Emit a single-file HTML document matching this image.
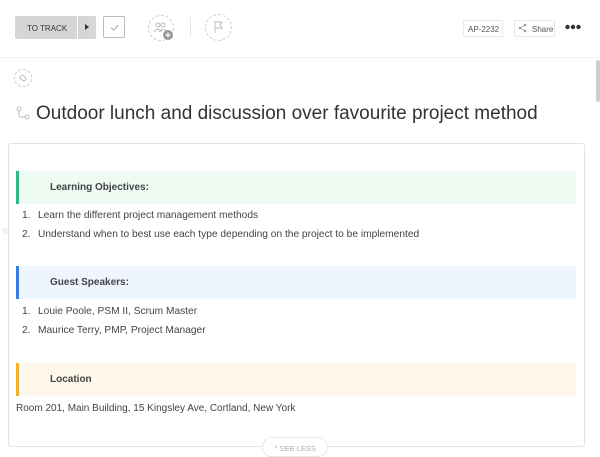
<!DOCTYPE html>
<html><head><meta charset="utf-8"><style>
*{margin:0;padding:0;box-sizing:border-box}
body{width:600px;height:454px;overflow:hidden;background:#fff;font-family:"Liberation Sans",sans-serif;color:#333;position:relative}
.abs{position:absolute}
.hdrline{left:0;top:57px;width:600px;height:1px;background:#f1f1f1}
.status{left:15px;top:16px;width:81px;height:23px;background:#d6d6d6;border-radius:2px;font-size:8px;color:#333;}
.status span{position:absolute;left:12px;top:7.5px}
.status .sep{position:absolute;left:62px;top:0;width:1px;height:23px;background:#fff}
.status .arr{position:absolute;left:70px;top:8px;width:0;height:0;border-left:4px solid #333;border-top:3.5px solid transparent;border-bottom:3.5px solid transparent}
.chk{left:103px;top:16px;width:22px;height:22px;border:1px solid #bbb;border-radius:2px}
.dc{border:1px dashed #ccc;border-radius:50%}
.card{left:8px;top:143px;width:577px;height:304px;border:1px solid #e4e4e4;border-radius:3px}
.bq{position:absolute;left:16px;width:560px;height:33px;font-size:10px;font-weight:bold;color:#444;padding:11px 0 0 31px;border-left:3px solid}
.li{position:absolute;left:22px;font-size:10.2px;color:#444}
.li b{font-weight:normal;display:inline-block;width:16px}
</style></head><body>
<div class="abs hdrline"></div>
<div class="abs status"><span>TO TRACK</span><div class="sep"></div><div class="arr"></div></div>
<div class="abs chk"><svg width="20" height="20" style="position:absolute;left:0;top:0"><path d="M7 11 l3 2 l4-5" stroke="#999" stroke-width="1" fill="none"/></svg></div>
<div class="abs dc" style="left:148px;top:15px;width:26px;height:26px"></div>
<svg class="abs" style="left:152px;top:20px" width="22" height="22"><circle cx="6" cy="5" r="2" fill="none" stroke="#aaa" stroke-width=".8"/><circle cx="11" cy="5" r="2" fill="none" stroke="#aaa" stroke-width=".8"/><path d="M2 12 q4-5 8 0 M7 12 q4-5 8 0" fill="none" stroke="#aaa" stroke-width=".8"/><circle cx="16" cy="15" r="5" fill="#999"/><path d="M16 12.5v5M13.5 15h5" stroke="#fff" stroke-width="1.3"/></svg>
<div class="abs" style="left:190px;top:17px;width:1px;height:20px;background:#e5e5e5"></div>
<div class="abs dc" style="left:205px;top:14px;width:27px;height:27px"></div>
<svg class="abs" style="left:212px;top:20px" width="14" height="14"><path d="M3 1v12M3 2h7l-2 3 2 3H3" fill="none" stroke="#bbb" stroke-width=".9"/></svg>
<div class="abs" style="left:463px;top:20px;width:40px;height:17px;border:1px solid #e8e8e8;border-radius:2px;font-size:8px;color:#555;padding:4px 0 0 4px">AP-2232</div>
<div class="abs" style="left:514px;top:20px;width:41px;height:17px;border:1px solid #e8e8e8;border-radius:2px;font-size:8px;color:#555;padding:4px 0 0 17px">Share</div>
<svg class="abs" style="left:518px;top:23px" width="10" height="10"><circle cx="7" cy="2" r="1.3" fill="#999"/><circle cx="2" cy="5" r="1.3" fill="#999"/><circle cx="7" cy="8" r="1.3" fill="#999"/><path d="M7 2L2 5l5 3" stroke="#999" stroke-width=".7" fill="none"/></svg>
<svg class="abs" style="left:565px;top:24px" width="16" height="6"><circle cx="2.5" cy="3" r="2.2" fill="#333"/><circle cx="8" cy="3" r="2.2" fill="#333"/><circle cx="13.5" cy="3" r="2.2" fill="#333"/></svg>
<div class="abs" style="left:596px;top:60px;width:4px;height:42px;background:#ccc;border-radius:2px"></div>
<div class="abs dc" style="left:14px;top:69px;width:18px;height:18px"></div>
<svg class="abs" style="left:18px;top:73px" width="10" height="10"><rect x="2" y="3" width="6" height="4" rx="1.5" transform="rotate(35 5 5)" fill="none" stroke="#bbb" stroke-width=".9"/></svg>
<svg class="abs" style="left:16px;top:106px" width="14" height="14"><circle cx="3" cy="3" r="2" fill="none" stroke="#aaa" stroke-width=".8"/><circle cx="11" cy="11" r="2" fill="none" stroke="#aaa" stroke-width=".8"/><path d="M3 5v4q0 2 2 2h4" fill="none" stroke="#aaa" stroke-width=".8"/></svg>
<div class="abs" style="left:36px;top:103px;font-size:19px;color:#333;white-space:nowrap">Outdoor lunch and discussion over favourite project method</div>
<div class="abs card"></div>
<div class="bq" style="top:171px;background:#edfbf3;border-color:#1ac38a">Learning Objectives:</div>
<div class="li" style="top:210px"><b>1.</b>Learn the different project management methods</div>
<div class="li" style="top:229px"><b>2.</b>Understand when to best use each type depending on the project to be implemented</div>
<div class="abs" style="left:3px;top:230px;font-size:8px;color:#bbb;line-height:4px">⁞⁞</div>
<div class="bq" style="top:266px;background:#eef5fe;border-color:#2d7ff9">Guest Speakers:</div>
<div class="li" style="top:306px"><b>1.</b>Louie Poole, PSM II, Scrum Master</div>
<div class="li" style="top:325px"><b>2.</b>Maurice Terry, PMP, Project Manager</div>
<div class="bq" style="top:363px;background:#fef8ec;border-color:#fdb00d">Location</div>
<div class="abs" style="left:16px;top:403px;font-size:10px;color:#444">Room 201, Main Building, 15 Kingsley Ave, Cortland, New York</div>
<div class="abs" style="left:262px;top:437px;width:66px;height:20px;background:#fff;border:1px solid #e8e8e8;border-radius:10px;font-size:7.5px;color:#aaa;padding:6px 0 0 11px">^ SEE LESS</div>
</body></html>
